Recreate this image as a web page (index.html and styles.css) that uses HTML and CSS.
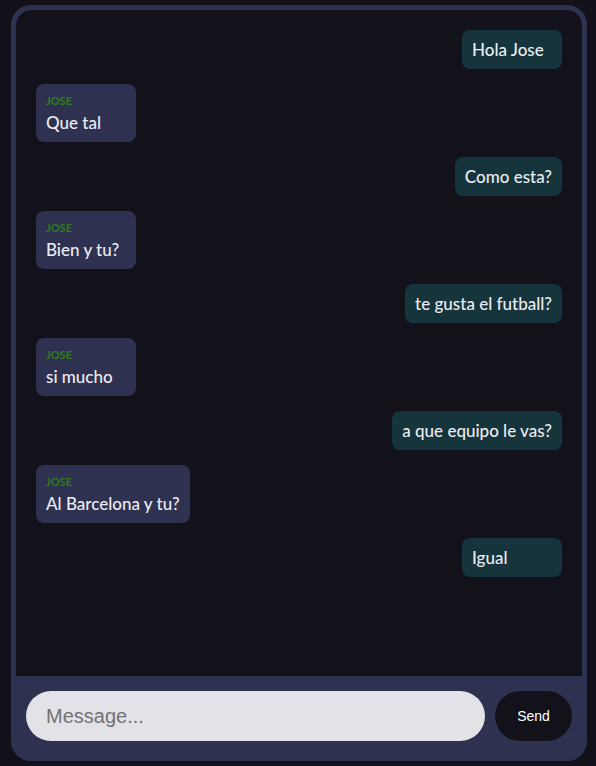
FILE: index.html
```html
<!DOCTYPE html>
<html lang="en">
<head>
    <title>Chat</title>
    <link rel="stylesheet" href="styles.css">
</head>
<body>
    <div class="chat">
        <div class="messages">
            <div class="msg mine">Hola Jose</div>
            <div class="msg theirs"><div class="name">JOSE</div>Que tal</div>
            <div class="msg mine">Como esta?</div>
            <div class="msg theirs"><div class="name">JOSE</div>Bien y tu?</div>
            <div class="msg mine">te gusta el futball?</div>
            <div class="msg theirs"><div class="name">JOSE</div>si mucho</div>
            <div class="msg mine">a que equipo le vas?</div>
            <div class="msg theirs"><div class="name">JOSE</div>Al Barcelona y tu?</div>
            <div class="msg mine">Igual</div>
        </div>
        <form class="composer">
            <input type="text" placeholder="Message...">
            <button type="submit">Send</button>
        </form>
    </div>
</body>
</html>
```

FILE: styles.css
```css
html, body {
    height: 100%;
}

body {
    margin: 0;
    padding: 5px 9px 5px 11px;
    box-sizing: border-box;
    background: #12111a;
    font-family: Lato, "Liberation Sans", sans-serif;
}

.chat {
    height: 100%;
    box-sizing: border-box;
    border: 5px solid #2f3150;
    border-radius: 20px;
    overflow: hidden;
    display: flex;
    flex-direction: column;
    background: #2f3150;
}

.messages {
    flex: 1;
    background: #13121b;
    padding: 20px;
    display: flex;
    flex-direction: column;
    align-items: flex-start;
    gap: 15px;
    border-radius: 15px 15px 0 0;
}

.msg {
    min-width: 80px;
    padding: 10px;
    border-radius: 8px;
    color: #ececf1;
    font-size: 17px;
    font-weight: 500;
    line-height: 19px;
}

.mine {
    align-self: flex-end;
    background: #15343c;
}

.theirs {
    background: #2f3150;
}

.name {
    color: #2e7d1c;
    font-size: 11px;
    font-weight: bold;
    line-height: 14px;
    margin-bottom: 5px;
}

.composer {
    display: flex;
    gap: 10px;
    padding: 15px 10px;
    margin: 0;
}

.composer input {
    flex: 1;
    height: 50px;
    box-sizing: border-box;
    border: none;
    border-radius: 25px;
    background: #e3e2e7;
    padding: 0 20px;
    font-family: "Liberation Sans", Arial, sans-serif;
    font-size: 20px;
    outline: none;
}

.composer input::placeholder {
    color: #727272;
}

.composer button {
    width: 77px;
    height: 50px;
    border: none;
    border-radius: 25px;
    background: #13121b;
    color: #ffffff;
    font-family: "Liberation Sans", Arial, sans-serif;
    font-size: 14px;
    cursor: pointer;
}
```
